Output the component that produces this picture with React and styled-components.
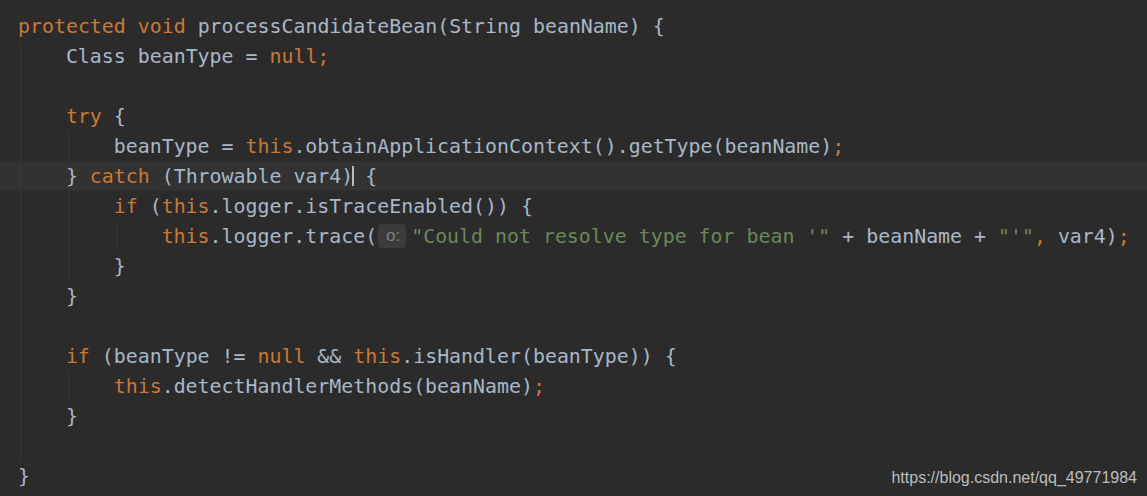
import React from 'react';
import styled, { createGlobalStyle } from 'styled-components';

const GlobalStyle = createGlobalStyle`
  html, body {
    margin: 0;
    padding: 0;
    background: #2b2b2b;
  }
  #root {
    width: 1147px;
    height: 496px;
    overflow: hidden;
  }
`;

const CHAR = 11.97;
const INDENT = 4;

// each line: indent level, guide levels, segments [kind, text]
const lines = [
  { indent: 0, guides: [], parts: [['kw', 'protected'], ['tx', ' '], ['kw', 'void'], ['tx', ' processCandidateBean(String beanName) {']] },
  { indent: 1, guides: [0], parts: [['tx', 'Class beanType = '], ['kw', 'null'], ['kw', ';']] },
  { indent: 0, guides: [0], parts: [] },
  { indent: 1, guides: [0], parts: [['kw', 'try'], ['tx', ' {']] },
  { indent: 2, guides: [0, 1], parts: [['tx', 'beanType = '], ['kw', 'this'], ['tx', '.obtainApplicationContext().getType(beanName)'], ['kw', ';']] },
  { indent: 1, guides: [0], current: true, parts: [['tx', '} '], ['kw', 'catch'], ['tx', ' (Throwable var4)'], ['caret', ''], ['tx', ' {']] },
  { indent: 2, guides: [0, 1], parts: [['kw', 'if'], ['tx', ' ('], ['kw', 'this'], ['tx', '.logger.isTraceEnabled()) {']] },
  { indent: 3, guides: [0, 1, 2], parts: [['kw', 'this'], ['tx', '.logger.trace('], ['hint', 'o:'], ['str', '"Could not resolve type for bean \'"'], ['tx', ' + beanName + '], ['str', '"\'"'], ['kw', ','], ['tx', ' var4)'], ['kw', ';']] },
  { indent: 2, guides: [0, 1], parts: [['tx', '}']] },
  { indent: 1, guides: [0], parts: [['tx', '}']] },
  { indent: 0, guides: [0], parts: [] },
  { indent: 1, guides: [0], parts: [['kw', 'if'], ['tx', ' (beanType != '], ['kw', 'null'], ['tx', ' && '], ['kw', 'this'], ['tx', '.isHandler(beanType)) {']] },
  { indent: 2, guides: [0, 1], parts: [['kw', 'this'], ['tx', '.detectHandlerMethods(beanName)'], ['kw', ';']] },
  { indent: 1, guides: [0], parts: [['tx', '}']] },
  { indent: 0, guides: [0], parts: [] },
  { indent: 0, guides: [], parts: [['tx', '}']] },
];

const Editor = styled.div`
  position: relative;
  width: 1147px;
  height: 496px;
  box-sizing: border-box;
  padding-top: 11px;
  background: #2b2b2b;
  font-family: "DejaVu Sans Mono", "Liberation Mono", monospace;
  font-size: 19.9px;
  color: #a9b7c6;
`;

const Line = styled.div`
  position: relative;
  display: flex;
  align-items: center;
  height: 30px;
  padding-left: ${(p) => 18 + p.$indent * INDENT * CHAR}px;
  background: ${(p) => (p.$current ? '#323232' : 'transparent')};
  white-space: pre;
`;

const Guide = styled.span`
  position: absolute;
  top: 0;
  bottom: 0;
  width: 1px;
  background: #373737;
`;

const Token = styled.span`
  color: ${(p) => (p.$kind === 'kw' ? '#cc7832' : p.$kind === 'str' ? '#6a8759' : '#a9b7c6')};
`;

const Caret = styled.span`
  display: inline-block;
  width: 2px;
  height: 20px;
  margin: 0 -1px;
  background: #bbbbbb;
`;

const Hint = styled.span`
  display: inline-flex;
  align-items: center;
  justify-content: center;
  box-sizing: border-box;
  width: 28px;
  height: 24px;
  margin: 0 5px 0 1px;
  border-radius: 4px;
  background: #3b3b3b;
  color: #808080;
  font-family: "Liberation Sans", Arial, sans-serif;
  font-size: 17px;
  padding-left: 2px;
`;

const Watermark = styled.div`
  position: absolute;
  right: 10px;
  bottom: 9px;
  font-family: "Liberation Sans", Arial, sans-serif;
  font-size: 16px;
  line-height: 18px;
  color: #bdbdbd;
`;

const renderPart = ([kind, text], i) => {
  if (kind === 'caret') return <Caret key={i} />;
  if (kind === 'hint') return <Hint key={i}>{text}</Hint>;
  return <Token key={i} $kind={kind}>{text}</Token>;
};

const App = () => (
  <>
    <GlobalStyle />
    <Editor>
      {lines.map((line, n) => (
        <Line key={n} $indent={line.indent} $current={line.current}>
          {line.guides.map((g) => (
            <Guide key={g} style={{ left: 20 + g * INDENT * CHAR }} />
          ))}
          {line.parts.map(renderPart)}
        </Line>
      ))}
      <Watermark>https://blog.csdn.net/qq_49771984</Watermark>
    </Editor>
  </>
);

export default App;
